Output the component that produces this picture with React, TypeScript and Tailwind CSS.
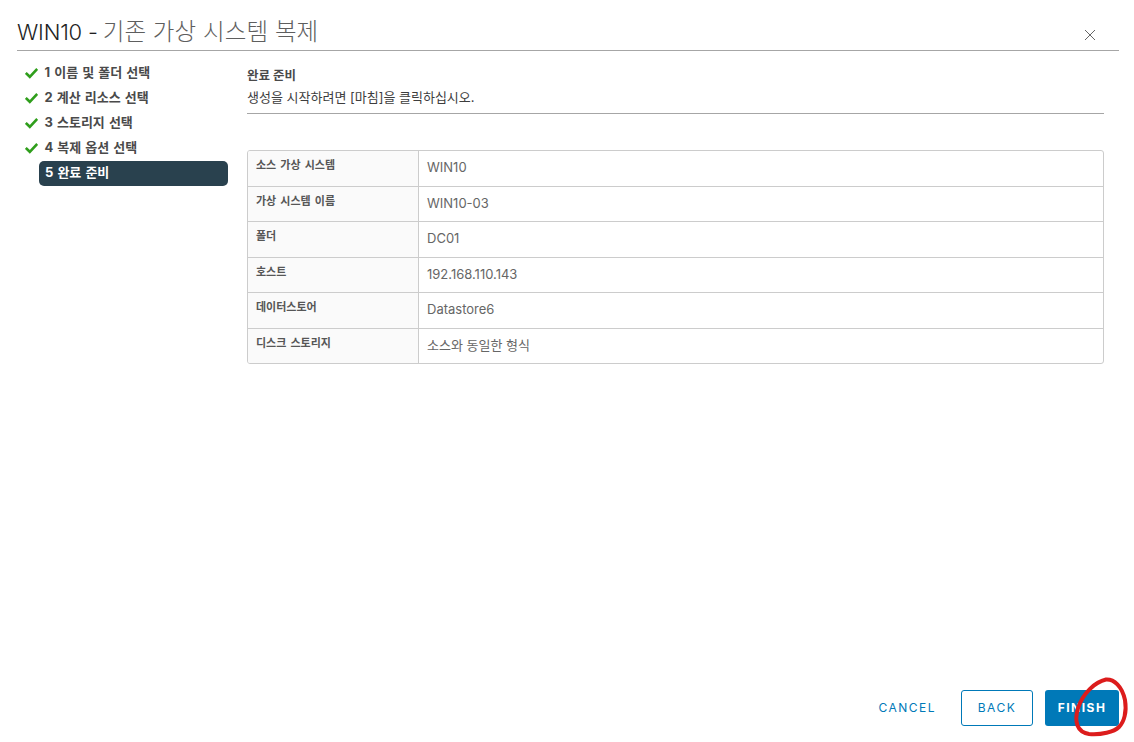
import React from "react";

const KR = "font-['Inter','Noto_Sans_CJK_KR',sans-serif]";

const steps = ["1 이름 및 폴더 선택", "2 계산 리소스 선택", "3 스토리지 선택", "4 복제 옵션 선택"];
const rows = [
  ["소스 가상 시스템", "WIN10"],
  ["가상 시스템 이름", "WIN10-03"],
  ["폴더", "DC01"],
  ["호스트", "192.168.110.143"],
  ["데이터스토어", "Datastore6"],
  ["디스크 스토리지", "소스와 동일한 형식"],
];

function Check() {
  return (
    <svg width="13" height="12" viewBox="0 0 13 12" className="shrink-0 -mt-[1px]">
      <path d="M0.8 6 L4.8 9.8 L12.2 2" fill="none" stroke="#2f9e1c" strokeWidth="2.6" />
    </svg>
  );
}

export default function App() {
  return (
    <div className={`${KR} w-[1134px] h-[742px] bg-white flex flex-col overflow-hidden relative`}>
      <header className="ml-[17px] mr-[15px] h-[51px] shrink-0 border-b border-[#a6a6a6] flex items-start justify-between">
        <h1 className="mt-[15px] text-[22px] leading-[34px] font-light tracking-[-0.2px] whitespace-nowrap">
          <span className="text-[#1f1f1f]">WIN10 - </span>
          <span className="text-[23.5px] text-[#5e5e5e] tracking-[0.1px] -ml-[1px]">기존 가상 시스템 복제</span>
        </h1>
        <svg width="12" height="12" viewBox="0 0 12 12" className="mt-[29px] mr-[23px]">
          <path d="M1 1 L11 11 M11 1 L1 11" stroke="#666666" strokeWidth="1" />
        </svg>
      </header>

      <div className="flex flex-1 min-h-0">
        <nav className="w-[211px] ml-[17px] shrink-0 pt-[10px] flex flex-col">
          {steps.map((s) => (
            <div key={s} className="h-[25px] flex items-center pl-[8px] gap-[7px] text-[13px] font-bold text-[#4a4a4a] leading-none [word-spacing:1px]">
              <Check />
              <span className="-mt-[2px] -ml-[0.5px]">{s}</span>
            </div>
          ))}
          <div className="ml-[22px] h-[25px] rounded-[5px] bg-[#29414e] text-white text-[13px] font-bold flex items-center pl-[6px] [word-spacing:1px]">
            <span className="-mt-[2px]">5 완료 준비</span>
          </div>
        </nav>

        <main className="w-[857px] ml-[19px] shrink-0 pt-[15px]">
          <h2 className="text-[12.5px] leading-[20px] font-bold text-[#4a4a4a]">완료 준비</h2>
          <p className="mt-[1px] h-[27px] text-[13px] leading-[20px] text-[#3d3d3d] border-b border-[#a6a6a6]">
            생성을 시작하려면 [마침]을 클릭하십시오.
          </p>
          <div className="mt-[36px] border border-[#cccccc] rounded-[3px] overflow-hidden flex flex-col h-[214px]">
            {rows.map(([k, v], i) => (
              <div key={k} className={`flex-1 flex ${i > 0 ? "border-t border-[#cccccc]" : ""}`}>
                <div className="w-[171px] shrink-0 bg-[#fafafa] border-r border-[#cccccc] pl-[8px] pt-[4px] text-[11px] leading-[20px] font-bold text-[#565656] [word-spacing:1.5px]">
                  {k}
                </div>
                <div className="flex-1 pl-[8px] pt-[6px] text-[13px] leading-[20px] text-[#666666]">{v}</div>
              </div>
            ))}
          </div>
        </main>
      </div>

      <footer className="h-[52px] shrink-0 flex items-start justify-end pr-[15px] text-[12px] font-semibold tracking-[1.5px]">
        <button className="h-[36px] px-[18px] mr-[7px] text-[#0079b8] font-normal">CANCEL</button>
        <button className="h-[36px] w-[72px] mr-[12px] border border-[#0079b8] rounded-[3px] text-[#0079b8] font-normal">BACK</button>
        <button className="h-[36px] w-[74px] rounded-[3px] bg-[#0079b8] text-white font-bold">FINISH</button>
      </footer>

      <svg width="64" height="68" viewBox="0 0 64 68" className="absolute left-[1070px] top-[672px] pointer-events-none">
        <path
          d="M36 7.5 C25 10 13 21 8 36 C4 50 7 60 19 62 C31 63 44 60 49 55 C54 50 57 40 55 28 C52 14 44 7 36 7.5"
          fill="none"
          stroke="#dc1c1c"
          strokeWidth="4"
          strokeLinecap="round"
        />
      </svg>
    </div>
  );
}
